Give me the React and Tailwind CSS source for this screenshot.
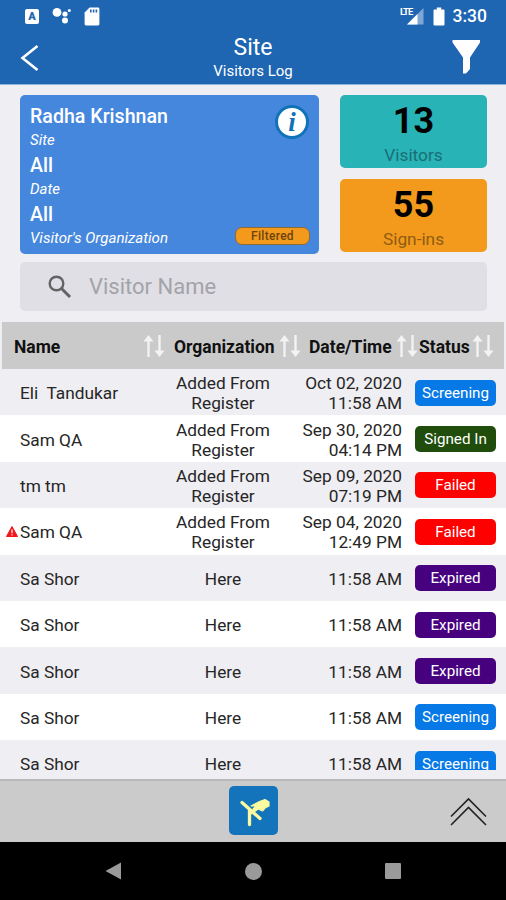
import clsx from 'clsx';

const rows = [
  { name: 'Eli  Tandukar', org: 'Added From Register', date: 'Oct 02, 2020', time: '11:58 AM', status: 'Screening' },
  { name: 'Sam QA', org: 'Added From Register', date: 'Sep 30, 2020', time: '04:14 PM', status: 'Signed In' },
  { name: 'tm tm', org: 'Added From Register', date: 'Sep 09, 2020', time: '07:19 PM', status: 'Failed' },
  { name: 'Sam QA', org: 'Added From Register', date: 'Sep 04, 2020', time: '12:49 PM', status: 'Failed', alert: true },
  { name: 'Sa Shor', org: 'Here', time: '11:58 AM', status: 'Expired' },
  { name: 'Sa Shor', org: 'Here', time: '11:58 AM', status: 'Expired' },
  { name: 'Sa Shor', org: 'Here', time: '11:58 AM', status: 'Expired' },
  { name: 'Sa Shor', org: 'Here', time: '11:58 AM', status: 'Screening' },
  { name: 'Sa Shor', org: 'Here', time: '11:58 AM', status: 'Screening' },
];

const statusColors = {
  Screening: 'bg-[#0679e6]',
  'Signed In': 'bg-[#204d0c]',
  Failed: 'bg-[#fe0000]',
  Expired: 'bg-[#47017f]',
};

function StatusBar() {
  return (
    <div className="flex h-8 items-center justify-between pl-[25px] pr-[19px] text-white">
      <div className="flex items-center">
        <div className="flex h-[15px] w-[14px] items-center justify-center rounded-[2px] bg-white text-[11px] font-black leading-none text-[#1e65b2]">
          A
        </div>
        <svg className="ml-[13px] h-[18px] w-[20px]" viewBox="0 0 20 18" fill="currentColor">
          <circle cx="5" cy="5.4" r="4.4" />
          <circle cx="13" cy="7" r="2.6" />
          <circle cx="13" cy="13.4" r="3" />
          <circle cx="17.3" cy="3.4" r="1.5" />
        </svg>
        <svg className="ml-3 h-[19px] w-[16px]" viewBox="0 0 16 19">
          <path d="M5.6 0.5H14a1.4 1.4 0 0 1 1.4 1.4v15.2A1.4 1.4 0 0 1 14 18.5H2a1.4 1.4 0 0 1-1.4-1.4V5.5z" fill="currentColor" />
          <path d="M6 2.6h1.6v3H6zM8.8 2.6h1.6v3H8.8zM11.6 2.6h1.6v3h-1.6z" fill="#1e65b2" />
        </svg>
      </div>
      <div className="flex items-center">
        <div className="flex items-start">
          <span className="z-10 -mr-[7px] text-[9.5px] font-bold leading-[9px] tracking-[-0.9px]">LTE</span>
          <svg className="h-[18px] w-[18px]" viewBox="0 0 18 18">
            <path d="M17.5 1v16.5H1z" fill="#7fa6d4" />
            <path d="M11.5 7v10.5H1z" fill="#fff" />
            <path d="M0 0h7.5v9H0z" fill="#1e65b2" />
          </svg>
        </div>
        <svg className="ml-[9px] h-[19px] w-[12px]" viewBox="0 0 12 19" fill="currentColor">
          <path d="M3.8 0.5h4.4v2h2.3a1 1 0 0 1 1 1v14a1 1 0 0 1-1 1h-9a1 1 0 0 1-1-1v-14a1 1 0 0 1 1-1h2.3z" />
        </svg>
        <span className="ml-[8px] pt-px text-[17.5px] font-medium leading-none">3:30</span>
      </div>
    </div>
  );
}

function Header() {
  return (
    <header className="h-[85px] shrink-0 border-b border-[#8fb2dc] bg-[#1e65b2] text-white">
      <StatusBar />
      <div className="grid grid-cols-[1fr_auto_1fr] items-start px-[20px]">
        <svg className="mt-[12px] h-[28px] w-[30px]" viewBox="0 0 30 28" fill="none" stroke="currentColor" strokeWidth="2.6">
          <path d="M17.5 2 2.5 14l15 12" />
        </svg>
        <div className="mt-[3px] text-center">
          <h1 className="text-[23px] leading-[26px]">Site</h1>
          <p className="text-[15px] leading-[20px]">Visitors Log</p>
        </div>
        <svg className="mr-[5px] mt-[7px] h-[36px] w-[30px] justify-self-end" viewBox="0 0 30 36" fill="currentColor">
          <path d="M1.5 1H29v2.5l-10 15V30l-4 4.5h-3v-16L1.5 3.5z" />
        </svg>
      </div>
    </header>
  );
}

function InfoCard() {
  return (
    <div className="relative h-[159px] w-[299px] rounded-[5px] bg-[#4687de] pl-[10px] pt-[9px] text-white">
      <p className="text-[19.6px] font-medium leading-[25px]">Radha Krishnan</p>
      <p className="pt-px text-[15px] italic leading-[20px]">Site</p>
      <p className="mt-[3px] text-[19.6px] font-medium leading-[25px]">All</p>
      <p className="pt-px text-[15px] italic leading-[20px]">Date</p>
      <p className="mt-[3px] text-[19.6px] font-medium leading-[25px]">All</p>
      <p className="pt-px text-[15.1px] italic leading-[20px]">Visitor's Organization</p>
      <div className="absolute right-[10px] top-[10px] flex h-[34px] w-[34px] items-center justify-center rounded-full border-[3px] border-[#1272b8] bg-white font-['Liberation_Serif',serif] text-[27px] font-bold italic leading-none text-[#1272b8]">
        i
      </div>
      <div className="absolute bottom-[9px] right-[9px] flex h-[18px] w-[75px] items-center justify-center rounded-[7px] border border-[#8d6a3a] bg-[#f39a1c] text-[12px] font-medium tracking-[0.3px] text-[#6d450c]">
        Filtered
      </div>
    </div>
  );
}

function StatCard({ value, label, className }) {
  return (
    <div className={clsx('h-[73px] w-[147px] rounded-[5px] text-center', className)}>
      <p className="pt-[5px] text-[36px] font-bold leading-[42px] text-black">{value}</p>
      <p className="pt-px text-[17.3px] leading-[25px]">{label}</p>
    </div>
  );
}

function SortArrows({ className }) {
  return (
    <svg className={clsx('h-[24px] w-[22px] shrink-0', className)} viewBox="0 0 22 24" fill="#f3f3f3">
      <path d="M5.5 1l5 6.5H6.700V23H4.300V7.500H0.500z" />
      <path d="M16.5 23l-5-6.5h3.800V1h2.400v15.500h3.800z" />
    </svg>
  );
}

function VisitorRow({ row, striped }) {
  return (
    <div
      className={clsx(
        'flex h-[46.4px] items-center text-[17.3px] leading-[20px] text-[#262626]',
        striped ? 'bg-[#efeef3]' : 'bg-white'
      )}
    >
      <div className="flex w-[20px] items-center pl-[6px]">
        {row.alert && (
          <svg className="h-[11px] w-[12px]" viewBox="0 0 12 11">
            <path d="M6 0.5l5.500 10H0.500z" fill="#f3161b" stroke="#f3161b" strokeLinejoin="round" />
            <path d="M6 3.5v3.700M6 8.300v1.200" stroke="#fff" strokeWidth="1.2" />
          </svg>
        )}
      </div>
      <div className="w-[146px] whitespace-pre pt-[2px]">{row.name}</div>
      <div className="w-[114px] px-2 pt-[2px] text-center">{row.org}</div>
      <div className="w-[122px] pt-[2px] text-right">
        {row.date && <div>{row.date}</div>}
        <div>{row.time}</div>
      </div>
      <div
        className={clsx(
          'ml-[13px] mt-px flex h-[26px] w-[81px] items-center justify-center rounded-[5px] text-[15.2px] text-white',
          statusColors[row.status]
        )}
      >
        {row.status}
      </div>
    </div>
  );
}

export default function App() {
  return (
    <div className="flex h-[900px] w-[506px] flex-col overflow-hidden bg-[#efeef3] font-['Roboto',sans-serif]">
      <Header />

      {/* Summary */}
      <div className="flex gap-[21px] pl-5 pt-[10px]">
        <InfoCard />
        <div className="flex flex-col gap-[11px]">
          <StatCard value="13" label="Visitors" className="bg-[#28b3b7] text-[#1a6f73]" />
          <StatCard value="55" label="Sign-ins" className="bg-[#f39a1c] text-[#8f5c12]" />
        </div>
      </div>

      {/* Search */}
      <div className="ml-5 mt-[8px] flex h-[49px] w-[467px] shrink-0 items-center rounded-[5px] bg-[#e0dfe5] pl-[28px]">
        <svg className="h-[24px] w-[24px]" viewBox="0 0 24 24" fill="none" stroke="#636366" strokeWidth="2.4">
          <circle cx="8.5" cy="8.5" r="6.8" />
          <path d="M13.5 13.5 22 22" strokeWidth="3" />
        </svg>
        <span className="ml-[17px] text-[22px] text-[#a3a3a8]">Visitor Name</span>
      </div>

      {/* Table */}
      <div className="mx-[2px] mt-[11px] flex h-[47px] shrink-0 items-center bg-[#cacaca] text-[17.5px] font-bold text-[#111]">
        <span className="w-[130px] pl-3 pt-[3px]">Name</span>
        <SortArrows className="ml-[11px]" />
        <span className="ml-[9px] w-[104px] pt-[3px]">Organization</span>
        <SortArrows className="ml-[1px]" />
        <span className="ml-[8px] w-[85px] pt-[3px]">Date/Time</span>
        <SortArrows className="ml-[2px]" />
        <span className="ml-px w-[52px] pt-[3px]">Status</span>
        <SortArrows className="ml-px" />
      </div>
      <div className="h-[401px] shrink-0 overflow-hidden">
        {rows.map((row, i) => (
          <VisitorRow key={i} row={row} striped={i % 2 === 0} />
        ))}
      </div>

      {/* Bottom toolbar */}
      <div className="mt-[9px] flex h-[63px] shrink-0 items-center justify-between border-t-2 border-[#b9b9bb] bg-[#cbcbcb] pl-[229px] pr-[19px]">
        <div className="mb-[2px] h-[49px] w-[49px] rounded-[5px] bg-[#1374bb]">
          <svg viewBox="0 0 49 49" fill="none" stroke="#fbfaa0" strokeLinecap="round">
            <path d="M13 16.5 31 32.500M20.500 24v14.500M20.500 28l5-4" strokeWidth="3.3" />
            <path d="M22 20l8.500-4.500L36 13.500l4 2.500v4l-4 2-2.500 3-4.500-2-2.500 2-2.500-2 3-3z" fill="#fbfaa0" strokeWidth="1.2" strokeLinejoin="round" />
          </svg>
        </div>
        <svg className="h-[30px] w-[37px]" viewBox="0 0 37 30" fill="none" stroke="#222" strokeWidth="1.6">
          <path d="M1 19.5 18.500 2 36 19.500M1 28 18.500 10.500 36 28" />
        </svg>
      </div>

      {/* System navigation */}
      <nav className="flex h-[58px] shrink-0 items-center bg-black pl-[105px] text-[#9a9a9a]">
        <svg className="h-[18px] w-[16px]" viewBox="0 0 16 18" fill="currentColor">
          <path d="M16 0.5v17L0.500 9z" />
        </svg>
        <div className="ml-[124px] h-[17px] w-[17px] rounded-full bg-[#9a9a9a]" />
        <div className="ml-[123px] h-[16px] w-[16px] rounded-[1px] bg-[#9a9a9a]" />
      </nav>
    </div>
  );
}
